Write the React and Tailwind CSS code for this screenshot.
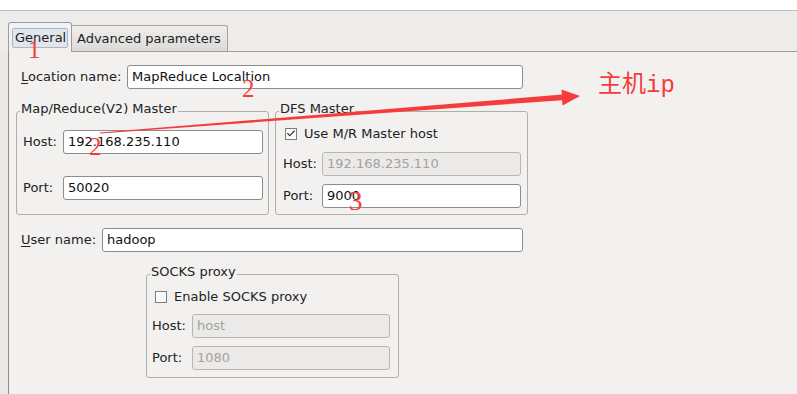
import { Check } from 'lucide-react'

const Field = ({ value, disabled, w }) => (
  <div
    className={`h-[24px] rounded-[3px] border px-[4px] flex items-center whitespace-nowrap overflow-hidden ${w} ${
      disabled ? 'bg-[#ebeae8] border-[#b8b6b2] text-[#a3a2a0]' : 'bg-white border-[#8e8c88] text-[#111]'
    }`}
  >
    {value}
  </div>
)

const Row = ({ label, labelW, children, className = '' }) => (
  <div className={`flex items-center ${className}`}>
    <div className={`${labelW} shrink-0`}>{label}</div>
    {children}
  </div>
)

const CheckBox = ({ checked, label }) => (
  <div className="flex items-center h-[15px]">
    <span className="w-[12px] h-[12px] border border-[#7f7d79] bg-[#fafafa] flex items-center justify-center">
      {checked && <Check size={11} strokeWidth={2.6} className="text-[#2b2b2b]" />}
    </span>
    <span className="ml-[7px]">{label}</span>
  </div>
)

const Group = ({ title, className = '', children }) => (
  <div className={`relative h-[104px] w-[253px] border border-[#b1afab] rounded-[3px] ${className}`}>
    <div className="absolute -top-[11px] left-[3px] px-[1px] bg-[#f2f1f0] leading-[15px]">{title}</div>
    {children}
  </div>
)

export default function App() {
  return (
    <div className="relative w-[797px] h-[394px] overflow-hidden bg-white font-['DejaVu_Sans',sans-serif] text-[13px] text-[#222]">
      <div className="h-[10px]" />

      {/* tab strip */}
      <div className="h-[41px] border-t border-[#c3c0bc] bg-[#edecea] flex items-end pl-[8px]">
        <div className="relative z-10 -mb-px h-[30px] w-[64px] bg-[#f2f1f0] border border-b-0 border-[#9f9d9a] border-t-[#7fa0cc] rounded-t-[3px] px-[3px] pt-[5px]">
          <div className="h-[20px] rounded-[2px] border border-[#a9b5c7] bg-[#e1e5ec] pl-[2px] flex items-center">General</div>
        </div>
        <div className="h-[26px] w-[156px] border border-l-0 border-b-0 border-[#a6a4a1] rounded-tr-[3px] bg-gradient-to-b from-[#efeeec] to-[#dcdbd9] pl-[5px] flex items-center">
          Advanced parameters
        </div>
      </div>

      <div className="flex h-[343px]">
        <div className="w-[8px] bg-[#eae9e7]" />
        <div className="flex-1 bg-[#f2f1f0] border-t border-l border-t-[#9f9d9a] border-l-[#8f8d8a] pt-[13px]">
          <Row
            label={<><span className="underline underline-offset-[2px]">L</span>ocation name:</>}
            labelW="w-[106px]"
            className="pl-[12px]"
          >
            <Field value="MapReduce Localtion" w="w-[396px]" />
          </Row>

          <div className="flex gap-[6px] mt-[22px] ml-[7px]">
            <Group title="Map/Reduce(V2) Master">
              <div className="pl-[6px] pt-[18px]">
                <Row label="Host:" labelW="w-[40px]">
                  <Field value="192.168.235.110" w="w-[200px]" />
                </Row>
                <Row label="Port:" labelW="w-[40px]" className="mt-[22px]">
                  <Field value="50020" w="w-[200px]" />
                </Row>
              </div>
            </Group>
            <Group title="DFS Master">
              <div className="pl-[9px] pt-[14px]">
                <CheckBox checked label="Use M/R Master host" />
              </div>
              <div className="pl-[7px] mt-[11px]">
                <Row label="Host:" labelW="w-[39px]">
                  <Field value="192.168.235.110" w="w-[199px]" disabled />
                </Row>
                <Row label="Port:" labelW="w-[39px]" className="mt-[8px]">
                  <Field value="9000" w="w-[199px]" />
                </Row>
              </div>
            </Group>
          </div>

          <Row
            label={<><span className="underline underline-offset-[2px]">U</span>ser name:</>}
            labelW="w-[81px]"
            className="pl-[12px] mt-[13px]"
          >
            <Field value="hadoop" w="w-[421px]" />
          </Row>

          <Group title="SOCKS proxy" className="ml-[137px] mt-[22px] w-[252px]">
            <div className="pl-[8px] pt-[14px]">
              <CheckBox label="Enable SOCKS proxy" />
            </div>
            <div className="pl-[5px] mt-[10px]">
              <Row label="Host:" labelW="w-[40px]">
                <Field value="host" w="w-[198px]" disabled />
              </Row>
              <Row label="Port:" labelW="w-[40px]" className="mt-[8px]">
                <Field value="1080" w="w-[198px]" disabled />
              </Row>
            </div>
          </Group>
        </div>
      </div>

      {/* red annotations drawn over the dialog */}
      <div className="absolute inset-0 z-20 pointer-events-none text-[#f53c3c]">
        <svg className="absolute left-0 top-0" width="797" height="394">
          <polygon points="100,132.6 562,94.6 561.4,89.4 580,96 562.6,105.4 562,100.2 100,133.4" fill="#f53c3c" />
        </svg>
        <div className="absolute left-[28px] top-[37px] leading-none text-[25px] font-['Liberation_Serif',serif]">1</div>
        <div className="absolute left-[242px] top-[76px] leading-none text-[25px] font-['Liberation_Serif',serif]">2</div>
        <div className="absolute left-[89px] top-[134px] leading-none text-[25px] font-['Liberation_Serif',serif]">2</div>
        <div className="absolute left-[349px] top-[188px] leading-none text-[27px] font-['Liberation_Serif',serif]">3</div>
        <div className="absolute left-[598px] top-[74px] leading-none text-[24px] font-['Liberation_Mono','Noto_Sans_CJK_SC',monospace]">主机ip</div>
      </div>
    </div>
  )
}
